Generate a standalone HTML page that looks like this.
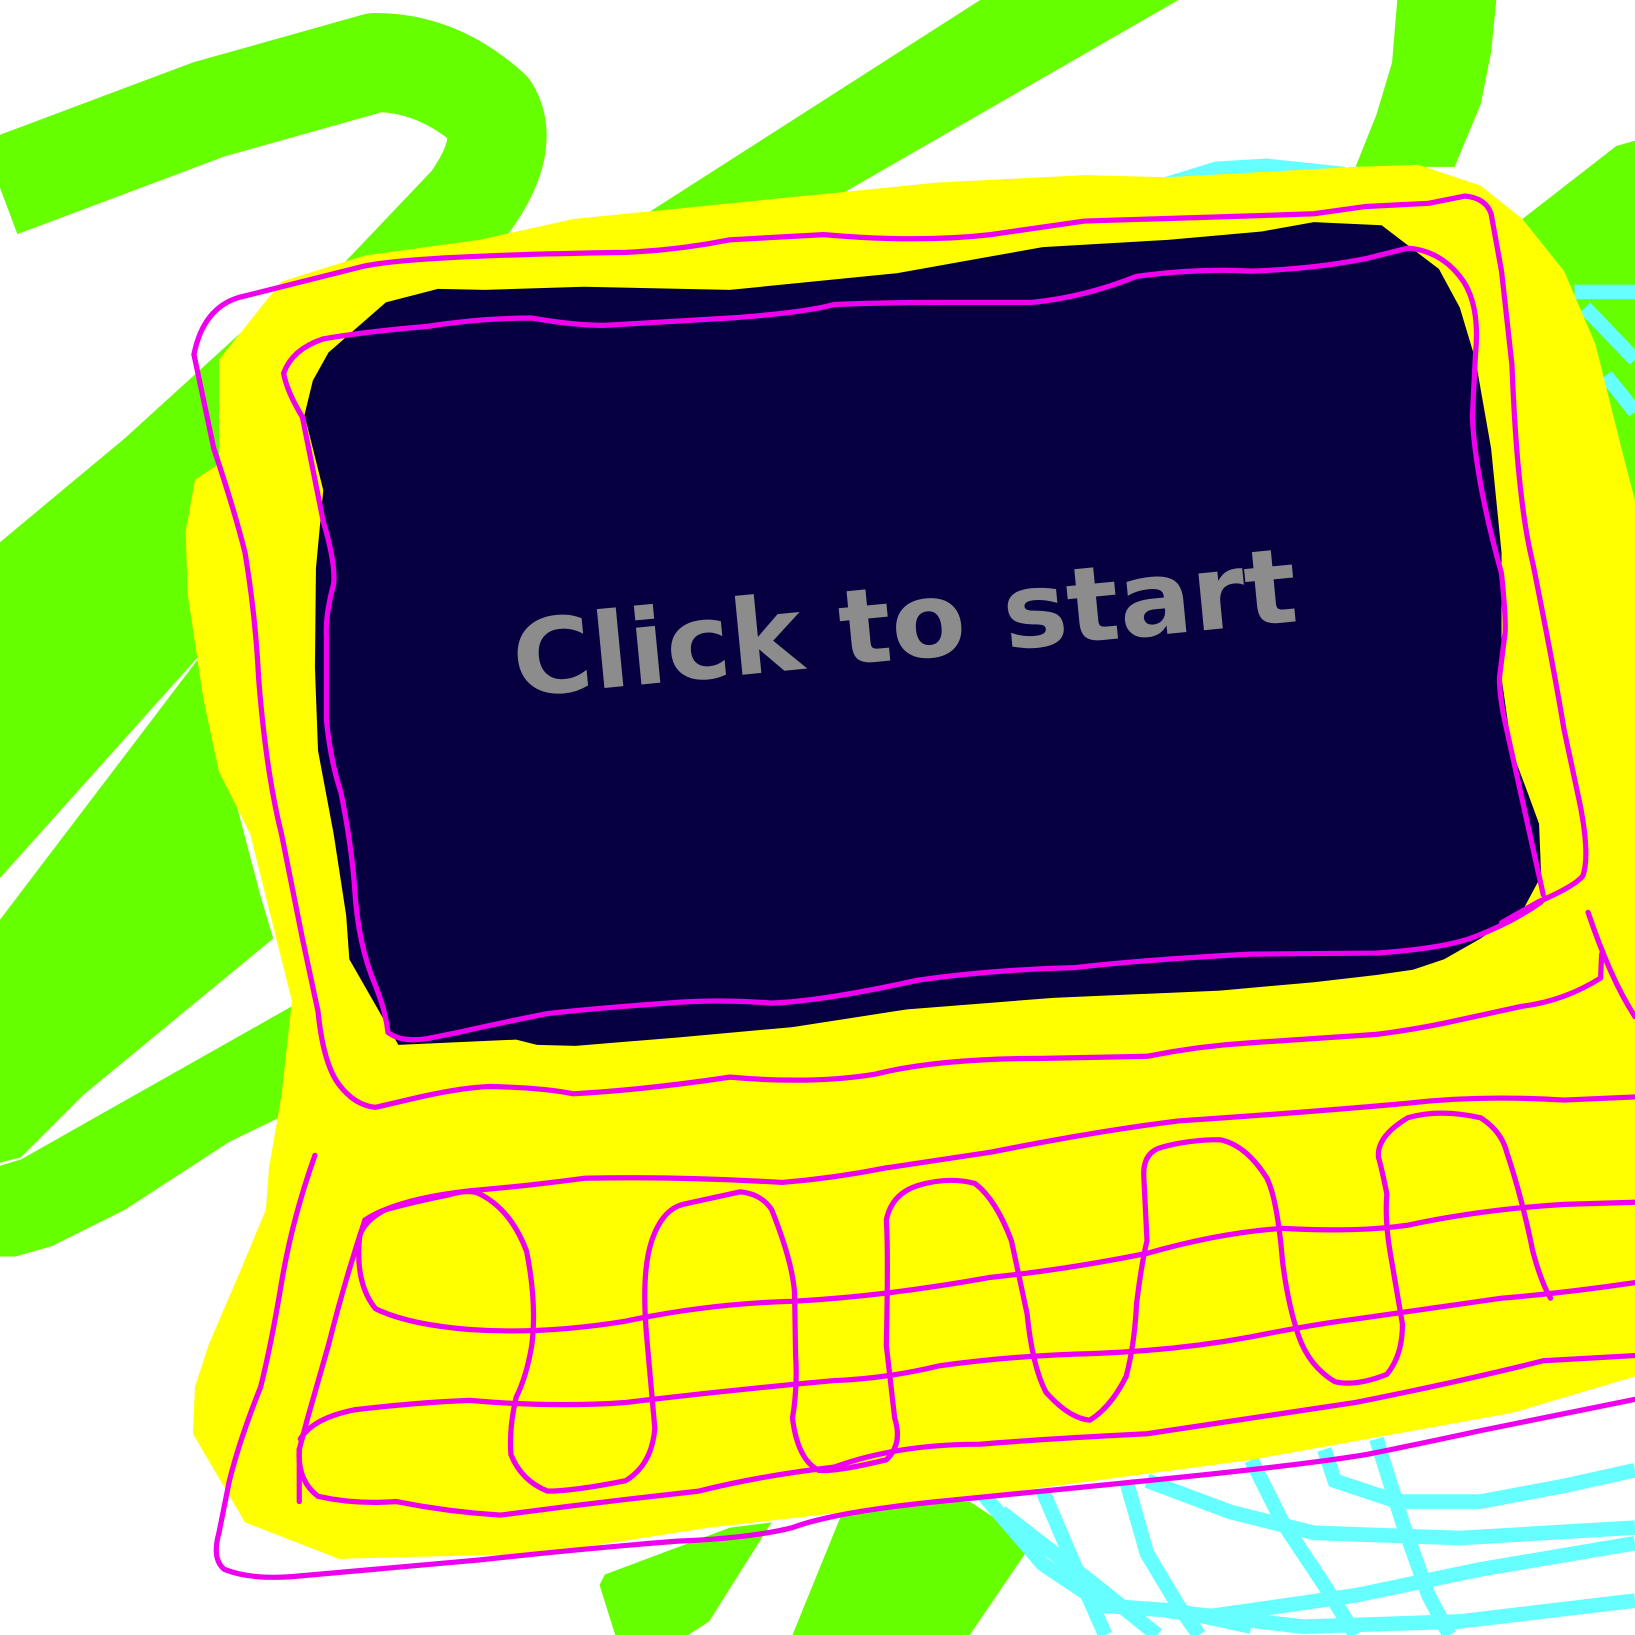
<!DOCTYPE html>
<html><head><meta charset="utf-8"><style>
html,body{margin:0;padding:0;background:#fff;}
svg{display:block;}
</style></head><body>
<svg width="1635" height="1635" viewBox="0 0 1568 1568" xmlns="http://www.w3.org/2000/svg">
<rect width="1568" height="1568" fill="#fff"/>
<g fill="#66ff00">
<polygon points="620,205 940,0 1130,0 800,190"/>
<polygon points="1340,0 1435,0 1430,50 1420,100 1395,160 1300,160 1320,110 1335,60"/>
<polygon points="1460,210 1550,140 1568,135 1568,540 1500,540"/>
<polygon points="0,520 120,420 230,320 240,620 190,630 0,842"/>
<polygon points="0,882 190,632 250,860 262,900 80,1050 20,1110 0,1115"/>
<polygon points="20,1112 280,965 282,1065 220,1095 120,1160 50,1195 15,1205 0,1205 0,1118"/>
<polygon points="580,1510 700,1465 740,1460 680,1555 660,1568 590,1568 575,1520"/>
<polygon points="760,1568 810,1445 930,1440 990,1480 930,1568"/>
</g>
<path d="M0,180 L200,105 L360,60 Q420,60 470,105 Q490,140 450,195 L350,300 L300,330" fill="none" stroke="#66ff00" stroke-width="95" stroke-linejoin="round"/>
<g fill="none" stroke="#66ffff" stroke-width="14">
<path d="M1510,280 L1568,280"/><path d="M1520,295 L1568,345"/><path d="M1540,360 L1568,395"/>
<path d="M940,1430 L1000,1500 L1060,1540 L1130,1545 L1200,1560"/>
<path d="M1080,1420 L1100,1490 L1130,1540 L1150,1568"/>
<path d="M1100,1420 L1180,1450 L1260,1470 L1400,1475 L1568,1465"/>
<path d="M1200,1400 L1230,1460 L1270,1520 L1300,1568"/>
<path d="M1270,1390 L1280,1420 L1340,1440 L1420,1440 L1500,1425 L1568,1410"/>
<path d="M1320,1380 L1345,1460 L1370,1530 L1390,1568"/>
<path d="M1000,1430 L1030,1500 L1060,1568"/>
<path d="M1160,1550 L1300,1530 L1420,1505 L1568,1480"/>
<path d="M1120,1545 L1250,1560 L1400,1555 L1568,1535"/>
<path d="M960,1450 L1050,1520 L1110,1568"/>
</g>
<polygon fill="#66ffff" points="1110,172 1165,155 1215,152 1290,160 1290,175 1120,180"/>
<polygon fill="#ffff00" points="210,345 270,270 350,245 460,230 550,210 700,195 900,175 1040,168 1120,170 1300,160 1360,158 1420,178 1460,210 1500,260 1530,330 1555,430 1568,480 1568,1320 1450,1355 1200,1400 900,1440 680,1465 520,1490 325,1495 235,1460 185,1375 187,1330 200,1290 230,1220 255,1160 258,1120 270,1050 280,960 240,800 210,740 195,670 180,570 178,510 187,460 210,445"/>
<polygon fill="#060040" points="292,398 300,365 315,338 370,290 420,277 465,278 560,275 700,278 860,262 1000,237 1120,230 1210,222 1260,213 1325,216 1380,258 1400,295 1415,345 1430,430 1440,530 1440,650 1450,720 1465,760 1476,790 1478,840 1462,870 1420,900 1385,920 1355,930 1320,935 1260,942 1170,950 1010,957 870,968 760,985 650,995 552,1003 515,1002 495,997 382,1002 335,920 332,878 320,800 305,720 302,640 303,545 310,470"/>
<text x="0" y="0" transform="translate(495,668) rotate(-5.5)" font-family="'DejaVu Sans',sans-serif" font-weight="bold" font-size="100" fill="#8c8c8c" textLength="755" lengthAdjust="spacingAndGlyphs">Click to start</text>
<g fill="none" stroke="#ee00ee" stroke-width="5" stroke-linejoin="round" stroke-linecap="round">
<path d="M186,340 Q195,295 230,285 L350,255 Q400,245 600,242 Q650,240 700,230 L790,225 Q880,233 950,225 L1040,212 L1200,207 L1260,205 L1310,198 L1370,195 L1405,188 Q1425,190 1430,205 L1440,260 L1450,350 Q1455,480 1470,540 Q1490,640 1500,700 L1515,770 Q1525,820 1518,840 Q1510,850 1475,865 L1440,885"/>
<path d="M186,340 L205,430 Q225,490 235,530 Q245,590 248,650 Q255,740 270,800 L290,900 L305,970 Q310,1020 325,1040 Q340,1060 360,1062 L390,1055 Q440,1043 470,1042 Q520,1043 550,1049 Q620,1045 700,1033 Q780,1040 840,1030 Q900,1015 1000,1015 L1100,1013 Q1150,1003 1200,1000 L1320,992 Q1360,987 1400,978 L1460,965 Q1500,960 1535,938 L1536,915"/>
<path d="M272,358 Q280,335 310,325 Q350,318 410,313 Q460,305 510,305 Q550,312 580,312 L700,305 Q770,300 800,292 Q850,290 900,290 L990,290 Q1040,285 1090,265 Q1150,257 1200,260 Q1260,258 1310,248 L1350,238 Q1380,240 1400,265 Q1420,290 1415,340 L1412,400 Q1415,460 1440,550 Q1445,600 1443,610 L1438,650 Q1438,670 1445,700 L1480,858"/>
<path d="M272,358 Q275,375 290,400 L310,500 Q322,540 320,560 Q312,590 313,610 L313,690 Q317,730 327,760 Q337,810 340,850 Q343,905 360,945 Q370,970 372,990 Q385,1000 410,996 L440,990 Q470,983 525,972 Q570,967 640,962 Q690,958 740,962 Q790,960 880,940 Q950,930 1030,928 Q1100,920 1200,915 L1320,914 Q1380,910 1410,900 Q1450,885 1478,865"/>
<path d="M1523,875 Q1545,940 1568,975"/>
<path d="M350,1170 Q380,1150 450,1142 Q500,1138 560,1130 Q650,1128 750,1134 Q800,1130 850,1120 L950,1105 Q1050,1085 1130,1075 Q1250,1067 1350,1058 Q1420,1050 1500,1055 L1568,1052"/>
<path d="M345,1185 Q340,1230 360,1255 Q390,1270 450,1275 Q520,1280 600,1267 Q680,1250 760,1248 Q850,1243 950,1225 Q1020,1218 1100,1202 Q1170,1182 1230,1178 Q1300,1182 1350,1175 Q1420,1160 1500,1155 L1568,1153"/>
<path d="M288,1380 Q300,1360 340,1352 Q400,1345 450,1343 Q530,1350 600,1345 Q700,1333 800,1324 Q850,1322 900,1310 Q970,1300 1050,1298 Q1130,1295 1200,1282 Q1260,1270 1300,1265 L1440,1245 Q1500,1240 1568,1230"/>
<path d="M287,1390 Q285,1420 305,1435 Q340,1443 380,1440 Q430,1450 480,1453 Q540,1445 600,1438 L670,1430 Q730,1415 800,1407 Q860,1385 940,1385 Q1000,1380 1100,1375 Q1200,1360 1300,1345 Q1400,1325 1480,1305 L1568,1300"/>
<path d="M210,1470 Q203,1495 215,1505 Q240,1515 280,1512 L460,1496 Q560,1485 650,1478 Q720,1475 760,1465 Q800,1450 900,1440 L1100,1420 Q1250,1405 1310,1395 Q1360,1385 1420,1372 L1568,1342"/>
<path d="M302,1108 Q280,1170 270,1230 Q260,1290 250,1330 Q230,1380 220,1420 L210,1470"/>
<path d="M287,1390 L287,1440"/>
<path d="M350,1170 Q330,1230 315,1290 L295,1360 L287,1390"/>
<path d="M345,1185 Q350,1170 370,1160 Q400,1152 430,1146 Q450,1140 460,1145 Q490,1160 505,1200 Q515,1250 510,1290 Q505,1320 495,1340 Q488,1370 490,1395 Q500,1420 525,1430 Q550,1430 600,1420 Q625,1405 628,1370 L620,1280 Q615,1220 625,1190 Q635,1160 655,1155 L710,1143 Q730,1145 740,1160 Q760,1210 762,1240 L763,1300 Q765,1330 760,1360 Q765,1400 785,1410 Q800,1412 850,1400 Q866,1385 858,1360 L850,1290 Q852,1200 850,1170 Q855,1145 880,1137 Q910,1128 935,1135 Q955,1150 970,1190 L985,1260 Q990,1310 1003,1335 Q1025,1360 1045,1362 Q1065,1350 1080,1320 Q1088,1290 1090,1250 Q1095,1210 1100,1190 L1097,1130 Q1095,1105 1115,1100 Q1140,1093 1170,1093 Q1195,1098 1215,1130 Q1225,1150 1230,1210 Q1235,1250 1245,1280 Q1255,1310 1280,1325 Q1300,1330 1330,1318 Q1345,1300 1345,1270 L1333,1200 Q1328,1170 1330,1145 Q1325,1120 1322,1110 Q1320,1090 1350,1072 Q1380,1063 1420,1072 Q1440,1085 1445,1105 Q1460,1150 1470,1200 Q1478,1230 1487,1245"/>
</g>
</svg>
</body></html>
